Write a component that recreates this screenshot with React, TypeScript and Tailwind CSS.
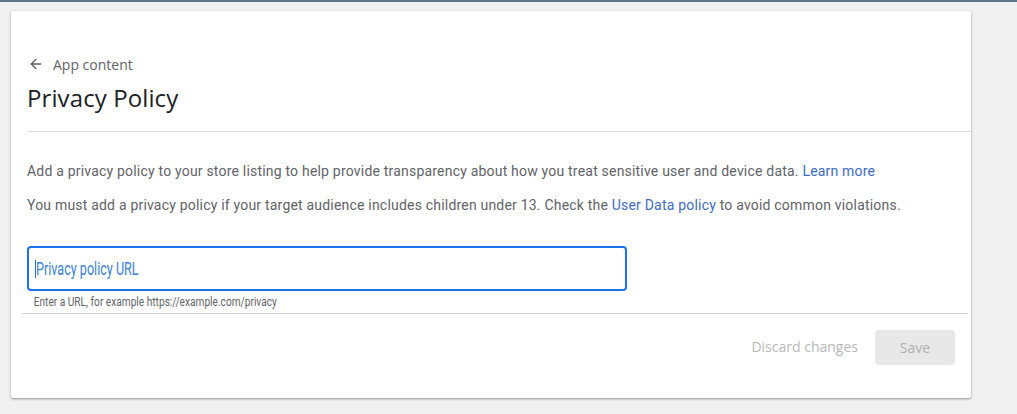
import { ArrowLeft } from 'lucide-react';

export default function App() {
  return (
    <div className="min-h-screen bg-[#f1f1f1] font-['Roboto',sans-serif]">
      <div className="h-[2px] bg-[#5e7489]" />
      <div className="pt-[9px] pl-[11px]">
        <div className="w-[960px] h-[387px] bg-white rounded-[2px] shadow-[0_1px_2px_rgba(0,0,0,0.3),0_1px_3px_1px_rgba(0,0,0,0.08)] flex flex-col">
          <div className="pl-4 pt-[43px]">
            <div className="flex items-center h-5 text-[14px] text-[#5f6368] font-['Open_Sans',sans-serif] font-medium">
              <ArrowLeft size={16} strokeWidth={2} className="ml-[1px] mr-[9px] text-[#5f6368]" />
              App content
            </div>
            <h1 className="mt-[10px] h-7 leading-7 text-[24px] text-[#202124] font-['Open_Sans',sans-serif] tracking-[0.1px]">
              Privacy Policy
            </h1>
            <div className="mt-[19px] border-t border-[#dadce0]" />
          </div>

          <div className="pl-4 text-[14px] leading-5 text-[#5f6368] tracking-[0.2px]">
            <p className="mt-[29px]">
              Add a privacy policy to your store listing to help provide transparency about how you treat sensitive user and device data.{' '}
              <span className="text-[#3c6bc9]">Learn more</span>
            </p>
            <p className="mt-[14px]">
              You must add a privacy policy if your target audience includes children under 13. Check the{' '}
              <span className="text-[#3c6bc9]">User Data policy</span> to avoid common violations.
            </p>
            <div className="mt-[31px] w-[600px] h-[45px] border-2 border-[#1a73e8] rounded-[4px] flex items-center pl-[6px] tracking-normal">
              <span className="w-px h-[18px] bg-[#1a73e8]" />
              <span className="text-[18px] text-[#3a7fdb] scale-x-[0.7] origin-left whitespace-nowrap">Privacy policy URL</span>
            </div>
            <div className="pl-2 pt-1 text-[12px] leading-[14px] text-[#5f6368] tracking-normal scale-x-[0.845] origin-left whitespace-nowrap">
              Enter a URL, for example https://example.com/privacy
            </div>
          </div>

          <div className="ml-[11px] mr-[3px] mt-[4px] border-t border-[#d2d2d2] flex items-center justify-end pr-[13px] pt-[16px] gap-[17px] font-['Open_Sans',sans-serif] text-[14px]">
            <span className="text-[#b8b8b8] -mt-[3px]">Discard changes</span>
            <button className="w-20 h-[35px] rounded-[4px] bg-[#e8e8e8] text-[#b0b0b0]">Save</button>
          </div>
        </div>
      </div>
    </div>
  );
}
